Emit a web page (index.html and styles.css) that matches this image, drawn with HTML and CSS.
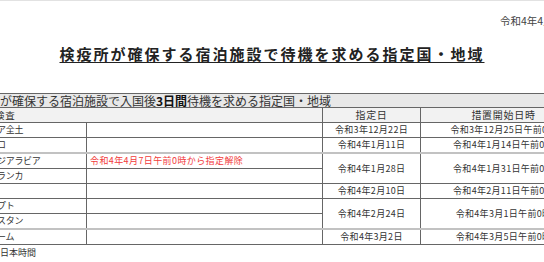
FILE: index.html
```html
<!DOCTYPE html>
<html lang="ja">
<head>
<meta charset="utf-8">
<title>指定国・地域</title>
<link rel="stylesheet" href="styles.css">
</head>
<body>
<div class="page">
  <div class="date">令和4年4月7日</div>
  <h1 class="title">検疫所が確保する宿泊施設で待機を求める指定国・地域</h1>
  <table class="sheet">
    <colgroup>
      <col class="c-name">
      <col class="c-note">
      <col class="c-date">
      <col class="c-start">
    </colgroup>
    <tr class="r-caption">
      <td colspan="4">が確保する宿泊施設で入国後<b>3日間</b>待機を求める指定国・地域</td>
    </tr>
    <tr class="r-head">
      <td colspan="2" class="h-left">検査</td>
      <td class="center">指定日</td>
      <td class="center">措置開始日時</td>
    </tr>
    <tr>
      <td class="name">ア全土</td><td></td>
      <td class="center">令和3年12月22日</td>
      <td class="center">令和3年12月25日午前0時</td>
    </tr>
    <tr>
      <td class="name">ロ</td><td></td>
      <td class="center">令和4年1月11日</td>
      <td class="center">令和4年1月14日午前0時</td>
    </tr>
    <tr class="sep">
      <td class="name">ジアラビア</td>
      <td class="note">令和4年4月7日午前0時から指定解除</td>
      <td class="center" rowspan="2">令和4年1月28日</td>
      <td class="center" rowspan="2">令和4年1月31日午前0時</td>
    </tr>
    <tr>
      <td class="name">ランカ</td><td></td>
    </tr>
    <tr>
      <td class="name"></td><td></td>
      <td class="center">令和4年2月10日</td>
      <td class="center">令和4年2月11日午前0時</td>
    </tr>
    <tr>
      <td class="name">プト</td><td></td>
      <td class="center" rowspan="2">令和4年2月24日</td>
      <td class="center" rowspan="2">令和4年3月1日午前0時</td>
    </tr>
    <tr>
      <td class="name">スタン</td><td></td>
    </tr>
    <tr class="sep">
      <td class="name">ーム</td><td></td>
      <td class="center">令和4年3月2日</td>
      <td class="center">令和4年3月5日午前0時</td>
    </tr>
  </table>
  <p class="foot">日本時間</p>
</div>
</body>
</html>
```

FILE: styles.css
```css
html, body {
  margin: 0;
  padding: 0;
  overflow: hidden;
  background: #fff;
}
body {
  font-family: "Noto Sans CJK JP", "Noto Sans", sans-serif;
  color: #333;
  border-top: 1px solid #e2e2e2;
  width: 544px;
  height: 261px;
}
.page {
  padding-top: 14px;
}
.date {
  font-size: 10.5px;
  line-height: 12px;
  text-align: right;
  margin-right: -26px;
  color: #444;
}
.title {
  margin: 18px 0 0;
  font-size: 15px;
  line-height: 18px;
  font-weight: bold;
  letter-spacing: 2px;
  text-align: center;
  color: #222;
  text-decoration: underline;
  text-decoration-thickness: 1px;
  text-underline-offset: 2px;
}
.sheet {
  margin: 30px 0 0 -6px;
  border-collapse: collapse;
  table-layout: fixed;
  width: 592px;
  font-size: 9px;
  letter-spacing: 0.3px;
}
.c-name { width: 92px; }
.c-note { width: 236px; }
.c-date { width: 98px; }
.c-start { width: 166px; }
.sheet td {
  border: 1px solid #666;
  padding: 0 2px;
  height: 14px;
  line-height: 12px;
  white-space: nowrap;
  overflow: hidden;
  vertical-align: middle;
}
.r-caption td {
  background: #e8e8e8;
  font-size: 12px;
  letter-spacing: 0;
  height: 13px;
  line-height: 13px;
  padding-left: 5px;
  color: #333;
}
.r-caption b {
  color: #111;
}
.r-head td {
  background: #f2f2f2;
  font-size: 10px;
  letter-spacing: 0.7px;
}
.h-left {
  text-indent: -2px;
  font-size: 9.5px !important;
}
.sep td {
  border-top: 2px solid #c2c2c2;
}
.name {
  letter-spacing: -0.3px;
}
.center {
  text-align: center;
}
.note {
  color: #f23b3b;
  letter-spacing: 0.4px;
  padding-left: 3px !important;
}
.foot {
  margin: 2px 0 0;
  font-size: 9px;
  line-height: 12px;
  color: #333;
}
```
